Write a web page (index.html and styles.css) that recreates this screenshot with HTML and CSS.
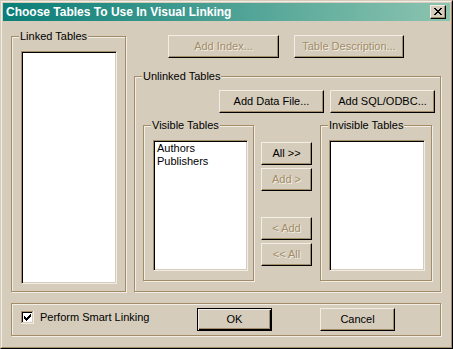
FILE: index.html
```html
<!DOCTYPE html>
<html>
<head>
<meta charset="utf-8">
<link rel="stylesheet" href="styles.css">
</head>
<body>
<div class="window">
  <div class="frame">
    <div class="titlebar">
      <span class="title">Choose Tables To Use In Visual Linking</span>
      <div class="close">
        <svg width="8" height="7" viewBox="0 0 8 7">
          <path d="M0 0h2v1H0zM6 0h2v1H6zM1 1h2v1H1zM5 1h2v1H5zM2 2h4v1H2zM3 3h2v1H3zM2 4h4v1H2zM1 5h2v1H1zM5 5h2v1H5zM0 6h2v1H0zM6 6h2v1H6z" fill="#000"/>
        </svg>
      </div>
    </div>
    <div class="client">
      <div class="main">
        <div class="group linked">
          <span class="legend">Linked Tables</span>
          <div class="listbox lb-linked"></div>
        </div>
        <div class="rightcol">
          <div class="toprow">
            <div class="btn disabled b-index">Add Index...</div>
            <div class="btn disabled b-desc">Table Description...</div>
          </div>
          <div class="group unlinked">
            <span class="legend legend-unlinked">Unlinked Tables</span>
            <div class="addrow">
              <div class="btn b-wide">Add Data File...</div>
              <div class="btn b-wide">Add SQL/ODBC...</div>
            </div>
            <div class="lists">
              <div class="group visible">
                <span class="legend legend-small">Visible Tables</span>
                <div class="listbox lb-visible">
                  <div class="item">Authors</div>
                  <div class="item">Publishers</div>
                </div>
              </div>
              <div class="movecol">
                <div class="btn b-move">All &gt;&gt;</div>
                <div class="btn b-move disabled">Add &gt;</div>
                <div class="btn b-move disabled b-gap">&lt; Add</div>
                <div class="btn b-move disabled">&lt;&lt; All</div>
              </div>
              <div class="group invisible">
                <span class="legend legend-small">Invisible Tables</span>
                <div class="listbox lb-invisible"></div>
              </div>
            </div>
          </div>
        </div>
      </div>
      <div class="group bottom">
        <svg class="checkbox" width="13" height="13" viewBox="0 0 13 13">
          <rect x="0" y="0" width="13" height="13" fill="#f2eee6"/>
          <rect x="0" y="0" width="12" height="12" fill="#a28d68"/>
          <rect x="1" y="1" width="11" height="11" fill="#d5ccbb"/>
          <rect x="1" y="1" width="10" height="10" fill="#000"/>
          <rect x="2" y="2" width="9" height="9" fill="#fff"/>
          <path d="M3 5h1v3H3zM4 6h1v3H4zM5 7h1v3H5zM6 6h1v3H6zM7 5h1v3H7zM8 4h1v3H8zM9 3h1v3H9z" fill="#000"/>
        </svg>
        <span class="cblabel">Perform Smart Linking</span>
        <div class="btn default b-ok">OK</div>
        <div class="btn b-cancel">Cancel</div>
      </div>
    </div>
  </div>
</div>
</body>
</html>
```

FILE: styles.css
```css
html, body {
  margin: 0;
  padding: 0;
  background: #d5ccbb;
}
body {
  font-family: "Liberation Sans", Arial, sans-serif;
  font-size: 11px;
  color: #000;
}
.window {
  width: 453px;
  height: 349px;
  box-sizing: border-box;
  border: 1px solid;
  border-color: #d5ccbb #000 #000 #d5ccbb;
  background: #d5ccbb;
}
.frame {
  height: 100%;
  box-sizing: border-box;
  border: 1px solid;
  border-color: #f2eee6 #a28d68 #a28d68 #f2eee6;
  padding: 1px;
  display: flex;
  flex-direction: column;
}
.titlebar {
  height: 18px;
  flex: none;
  display: flex;
  align-items: center;
  background: linear-gradient(to right, #0a7e78 0%, #8cc4b0 100%);
}
.title {
  flex: 1;
  padding-left: 3px;
  color: #fff;
  font-weight: bold;
  font-size: 12px;
  line-height: 14px;
  white-space: nowrap;
}
.close {
  width: 16px;
  height: 14px;
  margin-right: 4px;
  box-sizing: border-box;
  border: 1px solid;
  border-color: #f2eee6 #000 #000 #f2eee6;
  box-shadow: inset -1px -1px 0 #a28d68;
  background: #d5ccbb;
  display: flex;
  padding: 2px 0 0 3px;
}
.close svg { display: block; }
.client {
  flex: 1;
  padding-left: 8px;
  display: flex;
  flex-direction: column;
}
.main {
  display: flex;
  align-items: flex-start;
}
.group {
  box-sizing: border-box;
  border: 1px solid #a28d68;
  box-shadow: inset 1px 1px 0 #f2eee6, 1px 1px 0 #f2eee6;
  display: flex;
  flex-direction: column;
  align-items: flex-start;
}
.legend {
  margin: -7px 0 0 7px;
  padding: 0 1px;
  line-height: 13px;
  background: #d5ccbb;
  white-space: nowrap;
}
.legend-unlinked { margin-left: 7px; }
.legend-small { margin-left: 7px; }
.listbox {
  box-sizing: border-box;
  border: 1px solid;
  border-color: #a28d68 #f2eee6 #f2eee6 #a28d68;
  box-shadow: inset 1px 1px 0 #000, inset -1px -1px 0 #d5ccbb;
  background: #fff;
  padding: 1px 2px;
}
.item {
  line-height: 13px;
  padding-left: 1px;
  white-space: nowrap;
}
.linked {
  margin-top: 15px;
  width: 115px;
  height: 256px;
}
.lb-linked {
  margin: 8px 0 0 9px;
  width: 96px;
  height: 233px;
}
.rightcol {
  margin-left: 8px;
  width: 307px;
  display: flex;
  flex-direction: column;
}
.toprow {
  margin-top: 14px;
  display: flex;
}
.btn {
  box-sizing: border-box;
  height: 23px;
  border: 1px solid;
  border-color: #f2eee6 #000 #000 #f2eee6;
  box-shadow: inset -1px -1px 0 #a28d68;
  background: #d5ccbb;
  display: flex;
  align-items: center;
  justify-content: center;
  white-space: nowrap;
  line-height: 13px;
  padding-bottom: 1px;
}
.btn.disabled {
  color: #a28d68;
  text-shadow: 1px 1px 0 #f2eee6;
}
.btn.default {
  border-color: #000;
  box-shadow: inset 1px 1px 0 #f2eee6, inset -1px -1px 0 #000, inset -2px -2px 0 #a28d68;
}
.b-index {
  margin-left: 34px;
  width: 111px;
}
.b-desc {
  margin-left: 15px;
  width: 110px;
}
.unlinked {
  margin-top: 18px;
  width: 307px;
  height: 216px;
  align-items: stretch;
}
.unlinked > .legend { align-self: flex-start; }
.addrow {
  margin-top: 7px;
  padding-right: 5px;
  display: flex;
  justify-content: flex-end;
  gap: 6px;
}
.b-wide { width: 105px; }
.lists {
  margin-top: 12px;
  padding-left: 8px;
  display: flex;
  align-items: flex-start;
}
.visible {
  width: 111px;
  height: 156px;
}
.lb-visible {
  margin: 8px 0 0 9px;
  width: 95px;
  height: 131px;
}
.movecol {
  margin-left: 7px;
  width: 51px;
  padding-top: 17px;
  display: flex;
  flex-direction: column;
  gap: 3px;
}
.b-move { width: 51px; }
.b-gap { margin-top: 23px; }
.invisible {
  margin-left: 8px;
  width: 112px;
  height: 156px;
}
.lb-invisible {
  margin: 8px 0 0 8px;
  width: 96px;
  height: 131px;
}
.bottom {
  margin-top: 11px;
  width: 430px;
  height: 33px;
  flex-direction: row;
  align-items: flex-start;
}
.checkbox {
  display: block;
  margin: 7px 0 0 9px;
  flex: none;
}
.cblabel {
  margin: 7px 0 0 6px;
  width: 157px;
  line-height: 13px;
  white-space: nowrap;
}
.b-ok {
  margin-top: 4px;
  width: 75px;
}
.b-cancel {
  margin: 4px 0 0 48px;
  width: 75px;
}
```
